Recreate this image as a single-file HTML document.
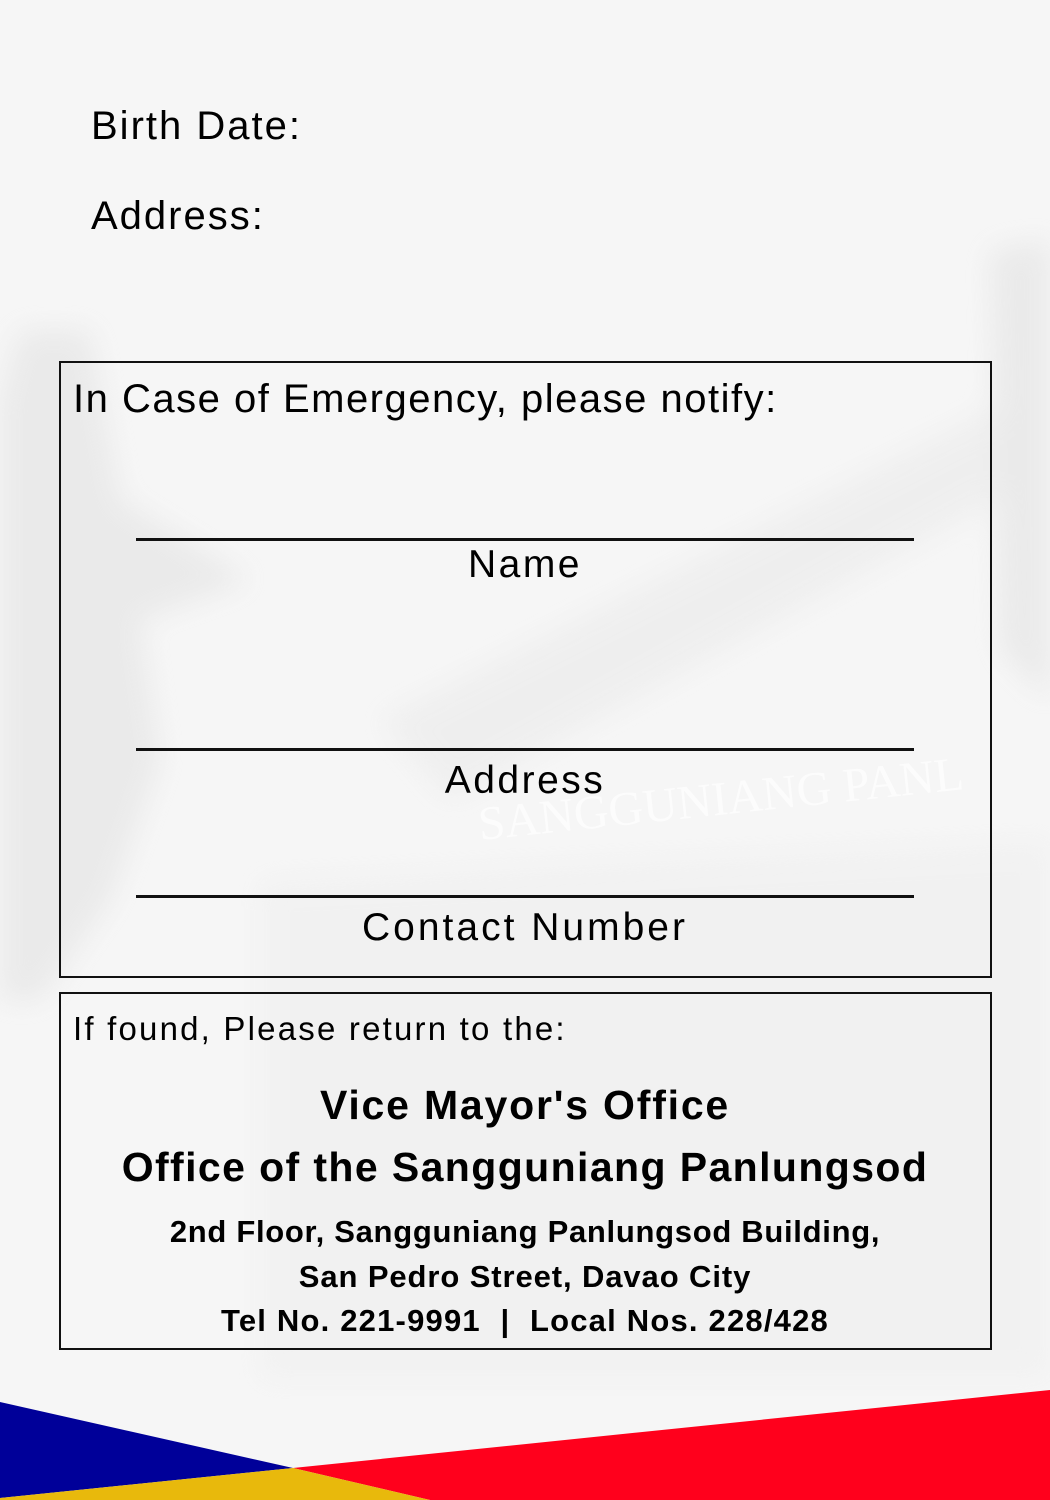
<!DOCTYPE html>
<html><head><meta charset="utf-8"><style>
html,body{margin:0;padding:0}
body{width:1050px;height:1500px;position:relative;overflow:hidden;background:#f6f6f6;font-family:"Liberation Sans",sans-serif;color:#000}
.t{position:absolute;line-height:1;white-space:nowrap}
.c{left:0;width:1050px;text-align:center}
.box{position:absolute;left:59px;width:929px;border:2px solid #111}
.ln{position:absolute;left:136px;width:778px;height:3px;background:#111}
</style></head><body>
<svg width="1050" height="1500" style="position:absolute;left:0;top:0">
<defs><filter id="b"><feGaussianBlur stdDeviation="14"/></filter></defs>
<g filter="url(#b)" fill="#dcdcdc" opacity="0.45">
<path d="M20 330 L90 330 L120 500 L250 580 L140 620 L160 760 L110 900 L40 1000 L0 1000 L0 400 Z"/>
<path d="M380 720 L1050 380 L1050 470 L450 800 Z" fill="#e6e6e6"/>
<path d="M260 880 L1050 840 L1050 1380 L260 1380 Z" fill="#ececec"/>
<path d="M990 250 L1050 240 L1050 700 L1000 650 Z"/>
</g>
<text x="480" y="840" font-family="Liberation Serif" font-size="48" fill="#ffffff" opacity="0.7" transform="rotate(-6 480 840)">SANGGUNIANG PANL</text>
<polygon points="0,1402 293,1468 0,1498" fill="#000099"/>
<polygon points="293,1468 1050,1390 1050,1500 430,1500" fill="#ff001c"/>
<polygon points="0,1498 293,1468 430,1500 0,1500" fill="#e8b90c"/>
</svg>
<div class="t" style="left:91px;top:106px;font-size:40px;letter-spacing:2px">Birth Date:</div>
<div class="t" style="left:91px;top:196px;font-size:40px;letter-spacing:2px">Address:</div>
<div class="box" style="top:361px;height:613px"></div>
<div class="t" style="left:73px;top:379px;font-size:40px;letter-spacing:1.5px">In Case of Emergency, please notify:</div>
<div class="ln" style="top:538px"></div>
<div class="t c" style="top:545px;font-size:39px;letter-spacing:2.5px">Name</div>
<div class="ln" style="top:748px"></div>
<div class="t c" style="top:761px;font-size:39px;letter-spacing:2.5px">Address</div>
<div class="ln" style="top:895px"></div>
<div class="t c" style="top:908px;font-size:39px;letter-spacing:3px">Contact Number</div>
<div class="box" style="top:992px;height:354px"></div>
<div class="t" style="left:73px;top:1012px;font-size:33px;letter-spacing:2.2px">If found, Please return to the:</div>
<div class="t c" style="top:1085px;font-size:41px;font-weight:bold;letter-spacing:1.8px">Vice Mayor's Office</div>
<div class="t c" style="top:1147px;font-size:41px;font-weight:bold;letter-spacing:1.4px">Office of the Sangguniang Panlungsod</div>
<div class="t c" style="top:1216px;font-size:31px;font-weight:bold;letter-spacing:0.7px">2nd Floor, Sangguniang Panlungsod Building,</div>
<div class="t c" style="top:1261px;font-size:31px;font-weight:bold;letter-spacing:0.9px">San Pedro Street, Davao City</div>
<div class="t c" style="top:1305px;font-size:31px;font-weight:bold;letter-spacing:1.2px">Tel No. 221-9991 &nbsp;|&nbsp; Local Nos. 228/428</div>
</body></html>
